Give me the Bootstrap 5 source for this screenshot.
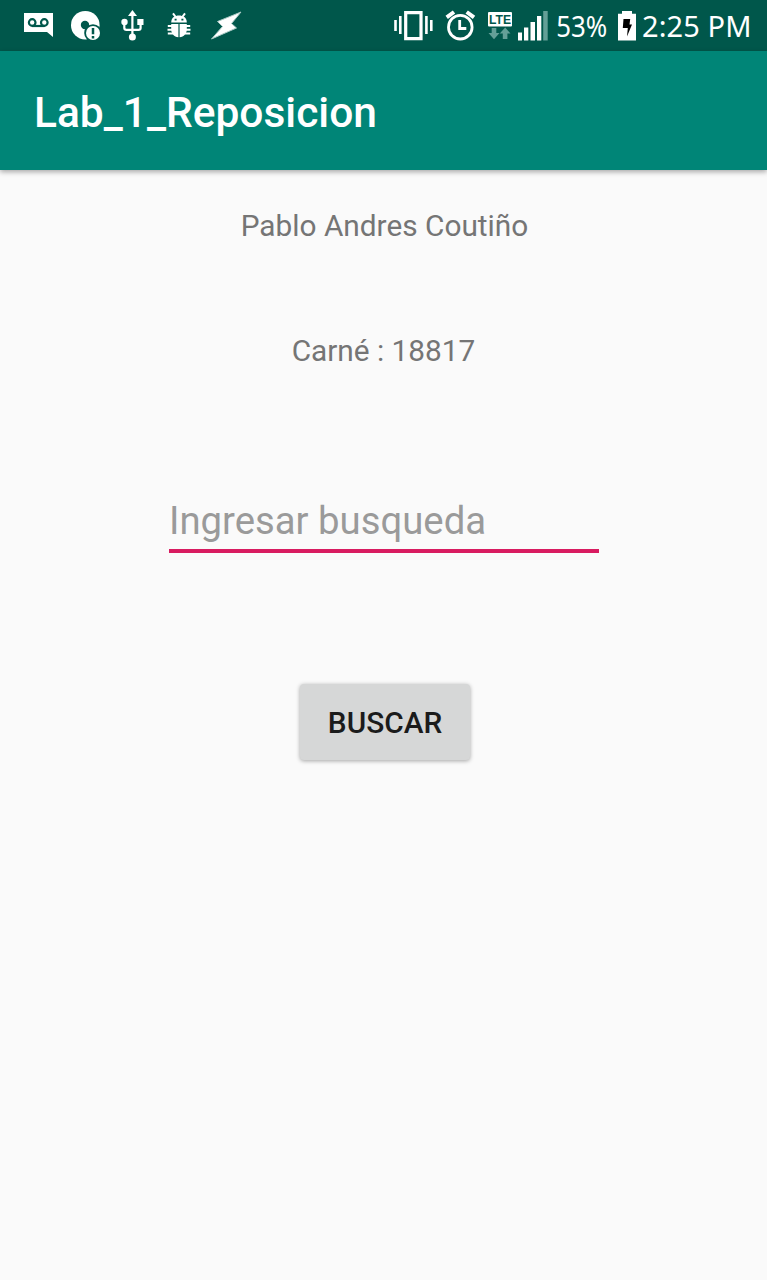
<!DOCTYPE html>
<html lang="es">
<head>
<meta charset="utf-8">
<meta name="viewport" content="width=device-width, initial-scale=1">
<title>Lab_1_Reposicion</title>
<link href="https://cdn.jsdelivr.net/npm/bootstrap@5.3.0/dist/css/bootstrap.min.css" rel="stylesheet">
<style>
body{font-family:Roboto,"Noto Sans",sans-serif;background:#fafafa;color:#757575;font-size:29.8px;line-height:36px}
.status-bar{height:51px;background:#00574b;color:#fff;font-family:"Noto Sans",sans-serif;font-size:29px;line-height:51px;padding-left:22px;padding-right:15px}
.status-bar svg{height:51px;flex:none;display:block}
.icons-left{gap:15px}
.icon-bug{margin-left:3px}
.icon-bolt{margin-left:1px}
.network-type{font:bold 13.5px "Liberation Sans",sans-serif;fill:#00574b}
.percent{width:61px;padding-left:9px;font-size:28.4px;line-height:52px;white-space:nowrap;transform:scaleX(.91);transform-origin:left}
.clock{width:110px;white-space:nowrap;letter-spacing:.1px}
.app-bar{height:119px;background:#008577;padding:0 0 0 34px;box-shadow:0 2px 5px rgba(0,0,0,.33);position:relative}
.app-title{font-size:42.5px;font-weight:500;color:#fff;line-height:50px;padding-top:5px}
.person{margin-top:38px;padding-left:2px}
.student-id{margin-top:89px}
.search-field{width:430px;height:57px;margin-top:127px;border:0;border-bottom:4px solid #d81b60;border-radius:0;background:transparent;padding:0 0 3px .5px;font-size:38.3px;color:#222}
.search-field::placeholder{color:#9a9a9a;opacity:1}
.search-field:focus{background:transparent;box-shadow:none;border-color:#d81b60}
.search-btn{width:170px;height:76px;margin-top:131px;margin-left:3px;padding:2px 0 0;background:#d6d7d7;color:#1b1b1b;font-size:29.8px;font-weight:500;border:0;border-radius:4px;box-shadow:0 1px 4px rgba(0,0,0,.35)}
</style>
<script src="https://cdn.jsdelivr.net/npm/bootstrap@5.3.0/dist/js/bootstrap.bundle.min.js"></script>
</head>
<body class="min-vh-100">
<div class="status-bar d-flex justify-content-between">
  <div class="icons-left d-flex">
    <svg width="32" viewBox="22 0 32 51" aria-hidden="true"><path fill="#fff" d="M24 13H53V37L47 32H24Z"/><g fill="none" stroke="#00574b" stroke-width="2.2"><circle cx="32.2" cy="22.5" r="3.3"/><circle cx="44.3" cy="22.5" r="3.3"/><path d="M32 26H44.5"/></g></svg>
    <svg width="33" viewBox="69 0 33 51" aria-hidden="true"><circle cx="85.3" cy="25.2" r="14.3" fill="#fff"/><circle cx="85" cy="25" r="4.2" fill="#00574b"/><circle cx="93" cy="33" r="8.8" fill="#00574b"/><circle cx="93" cy="33" r="7" fill="#fff"/><path d="M93 28V34.2M93 36V38.5" stroke="#00574b" stroke-width="2.5"/></svg>
    <svg width="30" viewBox="117 0 30 51" aria-hidden="true"><g fill="none" stroke="#fff" stroke-width="2.2"><path d="M132.4 14V37M124.3 23V28Q124.3 29.8 126.5 29.8H138.5Q140.6 29.8 140.6 28V22"/></g><g fill="#fff"><path d="M132.4 10L137 16H128Z"/><circle cx="124.5" cy="22" r="3.2"/><path d="M137.3 19H143.5V25H137.3Z"/><circle cx="132.4" cy="37" r="3.5"/></g></svg>
    <svg class="icon-bug" width="28" viewBox="165 0 28 51" aria-hidden="true"><g fill="#fff"><path d="M171.2 22.4C171.2 17.5 175 15.5 179 15.5S186.8 17.5 186.8 22.4Z"/><path d="M171.2 24H178.4V37.3C174 36.8 171.2 33.5 171.2 29.5ZM179.6 24H186.8V29.5C186.8 33.5 184 36.8 179.6 37.3Z"/></g><path d="M173 13.3L175.7 17M185 13.3L182.3 17M167.8 26H172M167.5 29.7H172M167.8 33.5H173M190.2 26H186M190.5 29.7H186M190.2 33.5H185" fill="none" stroke="#fff" stroke-width="2"/><path d="M174.6 18.8h2v1.6h-2ZM181.4 18.8h2v1.6h-2Z" fill="#00574b"/></svg>
    <svg class="icon-bolt" width="34" viewBox="209 0 34 51" aria-hidden="true"><path d="M241 12L217.5 21.5L222.5 26.5L211.5 39L236.5 28L231.5 23.5Z" fill="#fff" stroke="#a8c9c4" stroke-width="1" stroke-linejoin="round"/></svg>
  </div>
  <div class="d-flex">
    <svg width="40" viewBox="393 0 40 51" aria-hidden="true"><path fill="none" stroke="#fff" stroke-width="3.2" d="M405.7 12.7H421V38.7H405.7Z"/><path stroke="#fff" stroke-width="2.6" d="M400.3 16V34M395.5 20V31M426.4 16V34M431.3 20V31"/></svg>
    <svg width="55" viewBox="433 0 55 51" aria-hidden="true"><g fill="none" stroke="#fff"><circle cx="460.3" cy="27.2" r="11.8" stroke-width="2.8"/><path stroke-width="2.8" d="M459.7 20V28.5H466.3"/><path stroke-width="4" d="M446.7 17.4L454 12M474 17.4L466.7 12"/></g></svg>
    <svg width="60" viewBox="488 0 60 51"><rect x="488" y="12" width="24" height="14.5" rx="1" fill="#fff"/><text class="network-type" x="489" y="24.4" textLength="22" lengthAdjust="spacingAndGlyphs">LTE</text><g fill="#649f97"><path d="M491.7 28H496.3V33H499.5L494 39.2L488.5 33H491.7Z"/><path d="M502.8 39V33.5H499.7L505.2 27.5L510.5 33.5H507.4V39Z"/><path d="M543.2 11H547.7V40.5H543.2Z"/></g><path fill="#fff" d="M518 32.5H522V40.5H518ZM524 27.5H528.3V40.5H524ZM530.5 22H535V40.5H530.5ZM537 16H541.3V40.5H537Z"/></svg>
    <span class="percent">53%</span>
    <svg width="33" viewBox="609 0 33 51" aria-hidden="true"><path fill="#fff" d="M622 11H632V13.8H636V40.5H618V13.8H622Z"/><path fill="#000" d="M623.5 19H630.2L629.5 24.5H632L627 36.5L627.8 28H622.8Z"/></svg>
    <span class="clock">2:25 PM</span>
  </div>
</div>
<nav class="app-bar navbar"><h1 class="app-title m-0">Lab_1_Reposicion</h1></nav>
<main class="d-flex flex-column align-items-center pb-5">
  <p class="person mb-0">Pablo Andres Coutiño</p>
  <p class="student-id mb-0">Carné : 18817</p>
  <input class="form-control search-field" type="text" placeholder="Ingresar busqueda" aria-label="Ingresar busqueda">
  <button class="btn search-btn" type="button">BUSCAR</button>
</main>
</body>
</html>
